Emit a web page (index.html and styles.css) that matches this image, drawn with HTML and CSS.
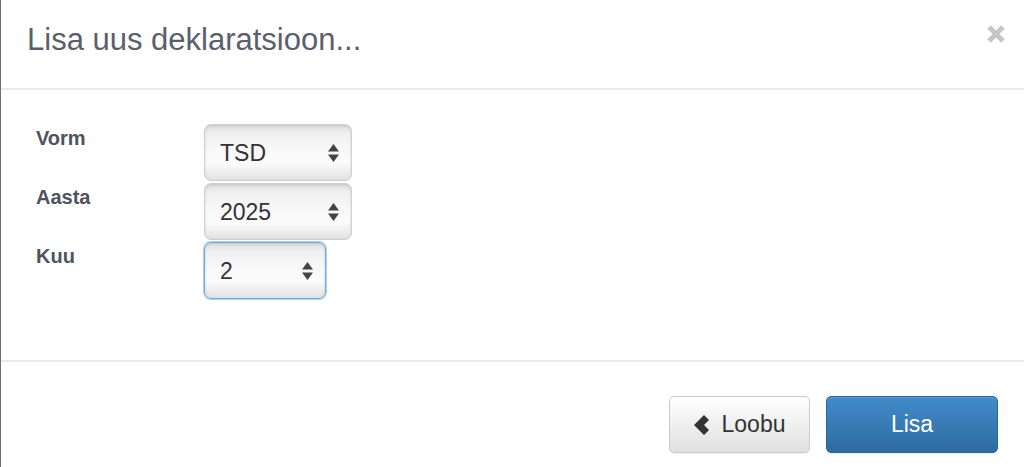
FILE: index.html
```html
<!DOCTYPE html>
<html lang="et">
<head>
<meta charset="utf-8">
<title>Lisa uus deklaratsioon</title>
<link rel="stylesheet" href="styles.css">
</head>
<body>
<div class="modal">
  <div class="modal-header">
    <h4 class="modal-title">Lisa uus deklaratsioon...</h4>
    <button class="close" type="button" aria-label="Sulge">
      <svg width="18" height="18" viewBox="0 0 18 18"><path d="M2 2 L16 16 M16 2 L2 16" stroke="#c6c6c6" stroke-width="5" fill="none"/></svg>
    </button>
  </div>
  <div class="modal-body">
    <form class="form">
      <div class="form-row">
        <label class="form-label" for="vorm">Vorm</label>
        <div class="select-wrap wide">
          <select id="vorm" class="select"><option>TSD</option></select>
          <svg class="arrows" width="11" height="18" viewBox="0 0 11 18"><path d="M5.5 0 L11 7.5 L0 7.5 Z M0 10.5 L11 10.5 L5.5 18 Z" fill="#444"/></svg>
        </div>
      </div>
      <div class="form-row">
        <label class="form-label" for="aasta">Aasta</label>
        <div class="select-wrap wide">
          <select id="aasta" class="select"><option>2025</option></select>
          <svg class="arrows" width="11" height="18" viewBox="0 0 11 18"><path d="M5.5 0 L11 7.5 L0 7.5 Z M0 10.5 L11 10.5 L5.5 18 Z" fill="#444"/></svg>
        </div>
      </div>
      <div class="form-row">
        <label class="form-label" for="kuu">Kuu</label>
        <div class="select-wrap narrow">
          <select id="kuu" class="select focused"><option>2</option></select>
          <svg class="arrows" width="11" height="18" viewBox="0 0 11 18"><path d="M5.5 0 L11 7.5 L0 7.5 Z M0 10.5 L11 10.5 L5.5 18 Z" fill="#444"/></svg>
        </div>
      </div>
    </form>
  </div>
  <div class="modal-footer">
    <button class="btn btn-default" type="button">
      <svg class="chev" width="16" height="20" viewBox="0 0 16 20"><polygon points="0,10 10,0 15,5 10,10 15,15 10,20" fill="#333"/></svg>
      <span>Loobu</span>
    </button>
    <button class="btn btn-primary" type="button">Lisa</button>
  </div>
</div>
</body>
</html>
```

FILE: styles.css
```css
html, body {
  margin: 0;
  padding: 0;
  background: #fff;
  height: 100%;
  overflow: hidden;
}

body {
  font-family: "Liberation Sans", Arial, Helvetica, sans-serif;
  color: #333;
}

.modal {
  border-left: 1px solid #6e6e6e;
  min-height: 100%;
  box-sizing: border-box;
  background: #fff;
}

.modal-header {
  display: flex;
  justify-content: space-between;
  align-items: flex-start;
  padding: 23px 19px 0 26px;
  height: 90px;
  box-sizing: border-box;
  border-bottom: 2px solid #e9e9e9;
}

.modal-title {
  margin: 0;
  font-size: 31px;
  line-height: 33px;
  font-weight: normal;
  color: #5b5e6d;
}

.close {
  margin-top: 2px;
  padding: 0;
  border: 0;
  background: none;
  line-height: 0;
  cursor: pointer;
}

.modal-body {
  padding: 34px 0 0 35px;
  height: 270px;
  box-sizing: border-box;
}

.form {
  display: flex;
  flex-direction: column;
  gap: 2px;
}

.form-row {
  display: grid;
  grid-template-columns: 168px auto;
  align-items: start;
}

.form-label {
  padding-top: 3px;
  font-size: 20px;
  line-height: 23px;
  font-weight: bold;
  color: #50535f;
}

.select-wrap {
  position: relative;
  height: 57px;
}

.select-wrap.wide { width: 148px; }
.select-wrap.narrow { width: 122px; }

.select {
  appearance: none;
  -webkit-appearance: none;
  width: 100%;
  height: 100%;
  margin: 0;
  padding: 0 0 0 15px;
  font-family: "Liberation Sans", Arial, Helvetica, sans-serif;
  font-size: 23px;
  color: #333;
  border: 1px solid #cfcfcf;
  border-radius: 7px;
  background: linear-gradient(to bottom, #dedede 0%, #efefef 14%, #f8f8f8 45%, #fbfbfb 70%, #e2e2e2 100%);
  box-shadow: inset 0 1px 3px rgba(0, 0, 0, 0.12);
  outline: none;
}

.select.focused {
  border-color: #69ade6;
  box-shadow: 0 0 0 1px rgba(105, 173, 230, 0.55), inset 0 1px 3px rgba(0, 0, 0, 0.12);
}

.arrows {
  position: absolute;
  right: 13px;
  top: 20px;
  pointer-events: none;
}

.modal-footer {
  border-top: 2px solid #e9e9e9;
  padding: 34px 26px 0 0;
  display: flex;
  justify-content: flex-end;
  gap: 16px;
}

.btn {
  height: 57px;
  box-sizing: border-box;
  display: flex;
  align-items: center;
  justify-content: center;
  font-family: "Liberation Sans", Arial, Helvetica, sans-serif;
  font-size: 23px;
  border-radius: 5px;
  cursor: pointer;
  padding: 0;
}

.btn-default {
  width: 141px;
  gap: 12px;
  color: #333;
  border: 1px solid #cbcbcb;
  background: linear-gradient(to bottom, #ffffff 0%, #e0e0e0 100%);
  box-shadow: inset 0 1px 0 rgba(255, 255, 255, 0.15), 0 1px 1px rgba(0, 0, 0, 0.06);
}

.chev {
  display: block;
}

.btn-primary {
  width: 172px;
  color: #fff;
  border: 1px solid #2b669a;
  background: linear-gradient(to bottom, #428bca 0%, #2d6ca2 100%);
  box-shadow: inset 0 1px 0 rgba(255, 255, 255, 0.15), 0 1px 1px rgba(0, 0, 0, 0.08);
}
```
